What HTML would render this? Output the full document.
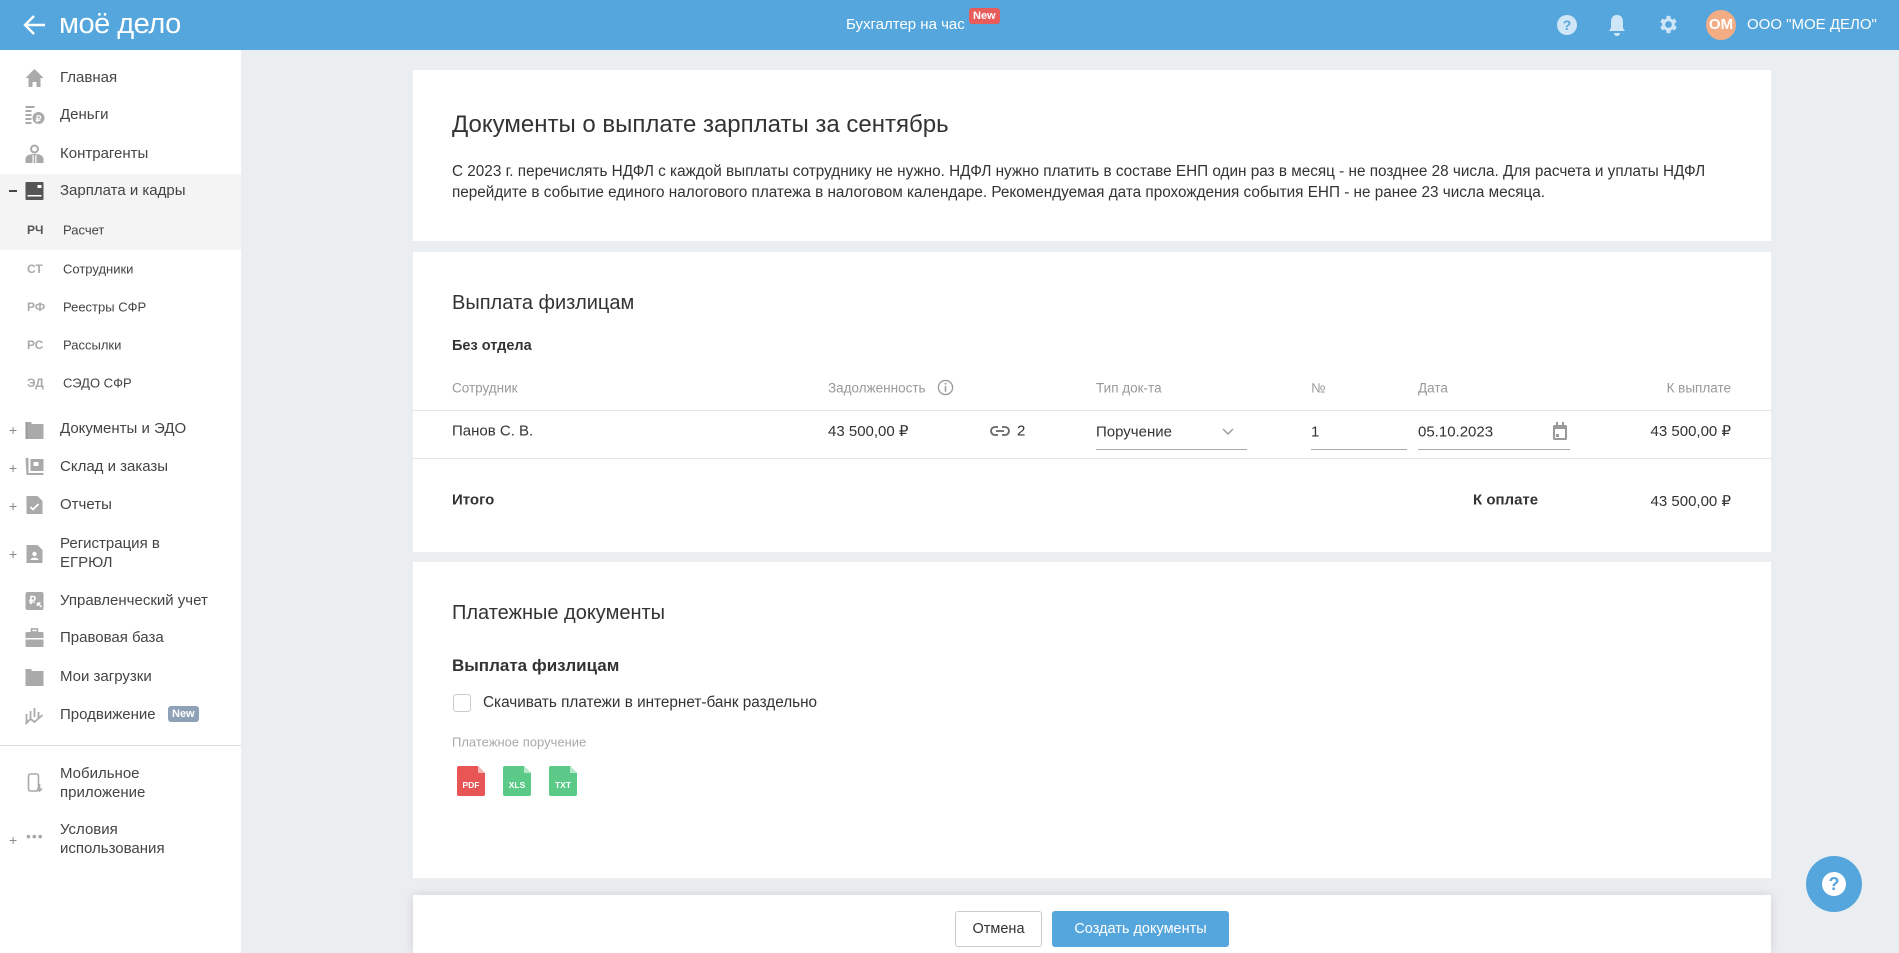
<!DOCTYPE html>
<html><head><meta charset="utf-8"><style>
*{box-sizing:border-box;margin:0;padding:0}
body{width:1899px;height:953px;overflow:hidden;background:#ebeef1;font-family:"Liberation Sans",Arial,sans-serif;color:#333;position:relative}
.a{position:absolute;white-space:nowrap}
.hdr{position:absolute;left:0;top:0;width:1899px;height:50px;background:#55a6dc}
.side{position:absolute;left:0;top:50px;width:241px;height:903px;background:#fff}
.mi{position:absolute;left:60px;font-size:15px;color:#444;transform:translateY(-50%);line-height:20px}
.ic{position:absolute;left:24px;width:21px;height:20px;transform:translateY(-50%)}
.pl{position:absolute;left:9px;font-size:14px;color:#888;transform:translateY(-50%)}
.ab{position:absolute;left:27px;font-size:12px;font-weight:bold;color:#aaa;transform:translateY(-50%)}
.si{position:absolute;left:63px;font-size:13px;color:#444;transform:translateY(-50%)}
.card{position:absolute;left:413px;width:1358px;background:#fff}
.m{transform:translateY(-50%)}
.gh{font-size:13.5px;color:#999}
.v{font-size:15px;color:#333}
</style></head><body>
<div class="hdr">
<svg class="a" style="left:23px;top:14px" width="24" height="22" viewBox="0 0 24 22"><path d="M22 11H3M11 2L2 11l9 9" fill="none" stroke="#fff" stroke-width="2.4"/></svg>
<div class="a" style="left:59px;top:8px;font-size:29px;color:#fff;letter-spacing:-0.5px">моё дело</div>
<div class="a" style="left:846px;top:16px;font-size:15px;color:#fff">Бухгалтер на час</div>
<div class="a" style="left:969px;top:8px;background:#e85c5c;color:#fff;font-size:11px;font-weight:bold;padding:2px 4px;border-radius:3px">New</div>
<svg class="a" style="left:1556px;top:14px" width="22" height="22" viewBox="0 0 22 22"><circle cx="11" cy="11" r="10" fill="#cfe6f6"/><text x="11" y="16" font-size="14" font-weight="bold" fill="#55a6dc" text-anchor="middle" font-family="Liberation Sans">?</text></svg>
<svg class="a" style="left:1607px;top:13px" width="20" height="24" viewBox="0 0 20 24"><path d="M10 2c-4 0-6 3-6 7v6l-2 3h16l-2-3V9c0-4-2-7-6-7zM7 20h6c0 2-1.5 3-3 3s-3-1-3-3z" fill="#cfe6f6"/></svg>
<svg class="a" style="left:1657px;top:13px" width="23" height="23" viewBox="0 0 24 24"><path fill="#cfe6f6" d="M19.4 13a7.5 7.5 0 000-2l2.1-1.6-2-3.5-2.5 1a7.6 7.6 0 00-1.7-1L15 3h-4l-.4 2.9a7.6 7.6 0 00-1.7 1l-2.5-1-2 3.5L6.5 11a7.5 7.5 0 000 2l-2.1 1.6 2 3.5 2.5-1a7.6 7.6 0 001.7 1L11 21h4l.4-2.9a7.6 7.6 0 001.7-1l2.5 1 2-3.5zM13 15.5a3.5 3.5 0 110-7 3.5 3.5 0 010 7z" transform="translate(-1 0)"/></svg>
<div class="a" style="left:1706px;top:10px;width:30px;height:30px;border-radius:50%;background:#f2ad85;color:#fff;font-weight:bold;font-size:15px;text-align:center;line-height:30px">ОМ</div>
<div class="a" style="left:1747px;top:16px;font-size:15px;color:#fff">ООО "МОЕ ДЕЛО"</div>
</div>

<div class="side">
<div style="position:absolute;left:0;top:124px;width:241px;height:76px;background:#f4f4f4"></div>
<div style="position:absolute;left:0;top:695px;width:241px;height:1px;background:#ddd"></div>
</div>
<div style="position:absolute;left:0;top:0;width:241px;height:953px">
<svg class="ic" style="top:78px" viewBox="0 0 20 20"><path d="M10 1L1 10h3v9h4v-5h4v5h4v-9h3z" fill="#aaa"/></svg>
<div class="mi" style="top:78px">Главная</div>
<svg class="ic" style="top:115px" viewBox="0 0 20 20"><rect x="1" y="1" width="9" height="2" fill="#aaa"/><rect x="1" y="5" width="6" height="2" fill="#aaa"/><rect x="1" y="9" width="6" height="2" fill="#aaa"/><rect x="1" y="13" width="6" height="2" fill="#aaa"/><rect x="1" y="17" width="6" height="2" fill="#aaa"/><circle cx="14" cy="13" r="6" fill="#aaa"/><text x="14" y="17" font-size="9" fill="#fff" text-anchor="middle" font-weight="bold">₽</text></svg>
<div class="mi" style="top:115px">Деньги</div>
<svg class="ic" style="top:154px" viewBox="0 0 20 20"><circle cx="10" cy="5" r="3.5" fill="none" stroke="#aaa" stroke-width="2"/><path d="M1 19v-4c0-3 3-5 9-5s9 2 9 5v4z" fill="#aaa"/><path d="M8 11h4v8H8z" fill="#fff"/><path d="M9.2 11h1.6v8H9.2z" fill="#aaa"/></svg>
<div class="mi" style="top:154px">Контрагенты</div>
<div class="a" style="left:9px;top:190px;width:8px;height:2px;background:#444"></div>
<svg class="ic" style="top:191px" viewBox="0 0 20 20"><rect x="1" y="1" width="18" height="18" rx="1" fill="#555"/><rect x="3" y="14" width="14" height="1.5" fill="#fff"/><rect x="13" y="4" width="4" height="3" fill="#fff"/></svg>
<div class="mi" style="top:191px">Зарплата и кадры</div>
<div class="ab" style="top:230px;color:#555">РЧ</div><div class="si" style="top:230px">Расчет</div>
<div class="ab" style="top:269px">СТ</div><div class="si" style="top:269px">Сотрудники</div>
<div class="ab" style="top:307px">РФ</div><div class="si" style="top:307px">Реестры СФР</div>
<div class="ab" style="top:345px">РС</div><div class="si" style="top:345px">Рассылки</div>
<div class="ab" style="top:383px">ЭД</div><div class="si" style="top:383px">СЭДО СФР</div>
<div class="pl" style="top:430px">+</div>
<svg class="ic" style="top:430px" viewBox="0 0 20 20"><path d="M1 2h6v2h12v15H1z" fill="#aaa"/><rect x="1" y="2" width="2" height="17" fill="#999"/></svg>
<div class="mi" style="top:429px">Документы и ЭДО</div>
<div class="pl" style="top:468px">+</div>
<svg class="ic" style="top:467px" viewBox="0 0 20 20"><path d="M1 1h3v15h15v2H2z" fill="#aaa"/><rect x="6" y="2" width="13" height="12" fill="#aaa"/><rect x="9" y="5" width="5" height="4" fill="#fff"/></svg>
<div class="mi" style="top:467px">Склад и заказы</div>
<div class="pl" style="top:506px">+</div>
<svg class="ic" style="top:505px" viewBox="0 0 20 20"><path d="M2 1h11l5 5v13H2z" fill="#aaa"/><path d="M6 12l2.5 2.5L14 9" stroke="#fff" stroke-width="1.8" fill="none"/></svg>
<div class="mi" style="top:505px">Отчеты</div>
<div class="pl" style="top:554px">+</div>
<svg class="ic" style="top:554px" viewBox="0 0 20 20"><path d="M2 1h11l5 5v13H2z" fill="#aaa"/><circle cx="10" cy="10" r="2.2" fill="#fff"/><path d="M6 16c0-3 8-3 8 0z" fill="#fff"/></svg>
<div class="mi" style="top:544px">Регистрация в</div><div class="mi" style="top:563px">ЕГРЮЛ</div>
<svg class="ic" style="top:601px" viewBox="0 0 20 20"><rect x="1" y="1" width="18" height="18" rx="2" fill="#aaa"/><text x="8" y="13" font-size="11" fill="#fff" text-anchor="middle" font-weight="bold">₽</text><path d="M13 12l4 4M13 12v3M13 12h3" stroke="#fff" stroke-width="1.5"/></svg>
<div class="mi" style="top:601px">Управленческий учет</div>
<svg class="ic" style="top:638px" viewBox="0 0 20 20"><rect x="7" y="1" width="6" height="3" fill="none" stroke="#aaa" stroke-width="1.6"/><rect x="1" y="4" width="18" height="15" rx="1" fill="#aaa"/><rect x="1" y="10" width="18" height="1.5" fill="#fff"/></svg>
<div class="mi" style="top:638px">Правовая база</div>
<svg class="ic" style="top:677px" viewBox="0 0 20 20"><path d="M1 2h6v2h12v15H1z" fill="#aaa"/></svg>
<div class="mi" style="top:677px">Мои загрузки</div>
<svg class="ic" style="top:716px" viewBox="0 0 20 20"><path d="M2 8v9M6 5v9M10 2v9M14 6v6M1 18l5-5 4 3 8-7" stroke="#aaa" stroke-width="1.8" fill="none"/></svg>
<div class="mi" style="top:715px">Продвижение</div>
<div class="a" style="left:168px;top:706px;background:#8fa1b6;color:#fff;font-size:11px;font-weight:bold;padding:2px 4px;border-radius:3px">New</div>
<svg class="ic" style="top:783px" viewBox="0 0 20 20"><rect x="4" y="1" width="10" height="17" rx="2" fill="none" stroke="#aaa" stroke-width="1.6"/><path d="M15 11v7M12.5 15.5L15 18l2.5-2.5" stroke="#aaa" stroke-width="1.6" fill="#fff"/></svg>
<div class="mi" style="top:774px">Мобильное</div><div class="mi" style="top:793px">приложение</div>
<div class="pl" style="top:840px">+</div>
<div class="a" style="left:26px;top:828px;font-size:14px;color:#aaa;letter-spacing:1px">•••</div>
<div class="mi" style="top:830px">Условия</div><div class="mi" style="top:849px">использования</div>
</div>

<div class="card" style="top:70px;height:171px">
<div class="a" style="left:39px;top:41px;font-size:24px;color:#333">Документы о выплате зарплаты за сентябрь</div>
<div class="a" style="left:39px;top:91px;font-size:15.3px;line-height:21px;color:#333;white-space:normal;width:1275px">С 2023 г. перечислять НДФЛ с каждой выплаты сотруднику не нужно. НДФЛ нужно платить в составе ЕНП один раз в месяц - не позднее 28 числа. Для расчета и уплаты НДФЛ перейдите в событие единого налогового платежа в налоговом календаре. Рекомендуемая дата прохождения события ЕНП - не ранее 23 числа месяца.</div>
</div>

<div class="card" style="top:252px;height:300px">
<div class="a" style="left:39px;top:40px;font-size:20px;color:#333">Выплата физлицам</div>
<div class="a" style="left:39px;top:86px;font-size:14.5px;font-weight:bold;color:#333">Без отдела</div>
<div class="a gh m" style="left:39px;top:136px">Сотрудник</div>
<div class="a gh m" style="left:415px;top:136px">Задолженность</div>
<svg class="a" style="left:524px;top:127px" width="17" height="17" viewBox="0 0 18 18"><circle cx="9" cy="9" r="7.5" fill="none" stroke="#999" stroke-width="1.4"/><rect x="8.2" y="7.5" width="1.6" height="6" fill="#999"/><circle cx="9" cy="5" r="1" fill="#999"/></svg>
<div class="a gh m" style="left:683px;top:136px">Тип док-та</div>
<div class="a gh m" style="left:898px;top:136px">№</div>
<div class="a gh m" style="left:1005px;top:136px">Дата</div>
<div class="a gh m" style="right:40px;top:136px">К выплате</div>
<div class="a" style="left:0;top:158px;width:1358px;height:1px;background:#e5e5e5"></div>
<div class="a v m" style="left:39px;top:179px">Панов С. В.</div>
<div class="a v m" style="left:415px;top:179px">43 500,00 ₽</div>
<svg class="a" style="left:576px;top:172px" width="22" height="14" viewBox="0 0 22 14"><path d="M9 3H6a4 4 0 000 8h3M13 3h3a4 4 0 010 8h-3M7 7h8" stroke="#666" stroke-width="1.8" fill="none"/></svg>
<div class="a v m" style="left:604px;top:179px">2</div>
<div class="a v m" style="left:683px;top:180px">Поручение</div>
<svg class="a" style="left:809px;top:176px" width="12" height="8" viewBox="0 0 12 8"><path d="M1 1l5 5 5-5" stroke="#999" stroke-width="1.4" fill="none"/></svg>
<div class="a" style="left:683px;top:197px;width:151px;height:1px;background:#aaa"></div>
<div class="a v m" style="left:898px;top:180px">1</div>
<div class="a" style="left:898px;top:197px;width:96px;height:1px;background:#aaa"></div>
<div class="a v m" style="left:1005px;top:180px">05.10.2023</div>
<svg class="a" style="left:1139px;top:170px" width="16" height="19" viewBox="0 0 16 19"><rect x="1" y="3" width="14" height="15" rx="1.5" fill="#999"/><rect x="3" y="7" width="10" height="9" fill="#fff"/><rect x="4" y="0" width="2" height="4" fill="#999"/><rect x="10" y="0" width="2" height="4" fill="#999"/><rect x="4" y="12" width="3" height="3" fill="#999"/></svg>
<div class="a" style="left:1005px;top:197px;width:152px;height:1px;background:#aaa"></div>
<div class="a v m" style="right:40px;top:179px">43 500,00 ₽</div>
<div class="a" style="left:0;top:206px;width:1358px;height:1px;background:#e5e5e5"></div>
<div class="a m" style="left:39px;top:248px;font-size:15px;font-weight:bold;color:#333">Итого</div>
<div class="a m" style="left:1060px;top:248px;font-size:15px;font-weight:bold;color:#333">К оплате</div>
<div class="a v m" style="right:40px;top:249px">43 500,00 ₽</div>
</div>

<div class="card" style="top:562px;height:316px">
<div class="a" style="left:39px;top:40px;font-size:20px;color:#333">Платежные документы</div>
<div class="a" style="left:39px;top:94px;font-size:17px;font-weight:bold;color:#333">Выплата физлицам</div>
<div class="a" style="left:40px;top:132px;width:18px;height:18px;border:1px solid #ccc;border-radius:3px"></div>
<div class="a m" style="left:70px;top:141px;font-size:15.3px;color:#333">Скачивать платежи в интернет-банк раздельно</div>
<div class="a m" style="left:39px;top:180px;font-size:13px;color:#aaa">Платежное поручение</div>
<svg class="a" style="left:44px;top:204px" width="28" height="30" viewBox="0 0 28 30"><path d="M0 2a2 2 0 012-2h19l7 7v21a2 2 0 01-2 2H2a2 2 0 01-2-2z" fill="#e85555"/><path d="M21 0l7 7h-7z" fill="#f5b5b5"/><text x="14" y="22" font-size="8.5" font-weight="bold" fill="#fff" text-anchor="middle" font-family="Liberation Sans">PDF</text></svg>
<svg class="a" style="left:90px;top:204px" width="28" height="30" viewBox="0 0 28 30"><path d="M0 2a2 2 0 012-2h19l7 7v21a2 2 0 01-2 2H2a2 2 0 01-2-2z" fill="#5bc987"/><path d="M21 0l7 7h-7z" fill="#b7e8cb"/><text x="14" y="22" font-size="8.5" font-weight="bold" fill="#fff" text-anchor="middle" font-family="Liberation Sans">XLS</text></svg>
<svg class="a" style="left:136px;top:204px" width="28" height="30" viewBox="0 0 28 30"><path d="M0 2a2 2 0 012-2h19l7 7v21a2 2 0 01-2 2H2a2 2 0 01-2-2z" fill="#5bc987"/><path d="M21 0l7 7h-7z" fill="#b7e8cb"/><text x="14" y="22" font-size="8.5" font-weight="bold" fill="#fff" text-anchor="middle" font-family="Liberation Sans">TXT</text></svg>
</div>

<div class="card" style="top:895px;height:58px;box-shadow:0 0 10px rgba(0,0,0,0.12)">
<div class="a" style="left:542px;top:16px;width:87px;height:36px;border:1px solid #ccc;border-radius:3px;font-size:14.5px;color:#333;text-align:center;line-height:34px">Отмена</div>
<div class="a" style="left:639px;top:16px;width:177px;height:36px;background:#55a6dc;border-radius:3px;font-size:14.5px;color:#fff;text-align:center;line-height:36px">Создать документы</div>
</div>

<div class="a" style="left:1806px;top:856px;width:56px;height:56px;border-radius:50%;background:#55a6dc"></div>
<div class="a" style="left:1822px;top:872px;width:24px;height:24px;border-radius:50%;background:#fff;color:#55a6dc;font-weight:bold;font-size:18px;text-align:center;line-height:24px">?</div>
</body></html>
